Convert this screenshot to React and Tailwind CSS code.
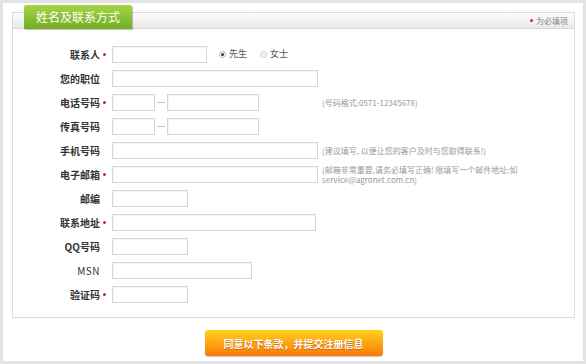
import React from "react";

const rows = [
  { label: "联系人", req: true, w: 95, radio: true },
  { label: "您的职位", w: 206 },
  { label: "电话号码", req: true, phone: true, hint: ["(号码格式:0571-12345678)"] },
  { label: "传真号码", phone: true },
  { label: "手机号码", w: 206, hint: ["(建议填写, 以便让您的客户及时与您取得联系!)"] },
  {
    label: "电子邮箱",
    req: true,
    w: 206,
    hint: ["(邮箱非常重要,请务必填写正确! 限填写一个邮件地址:如", "service@agronet.com.cn)"],
  },
  { label: "邮编", w: 76 },
  { label: "联系地址", req: true, w: 204 },
  { label: "QQ号码", w: 76 },
  { label: "MSN", w: 140, latin: true },
  { label: "验证码", req: true, w: 76 },
];

function Box({ w }) {
  return (
    <div
      className="h-[17px] border border-[#d6d6d6] bg-white shadow-[inset_1px_1px_1px_rgba(0,0,0,0.04)]"
      style={{ width: w }}
    />
  );
}

function Radio({ checked, text }) {
  return (
    <div className="flex items-center gap-[3px]">
      <span
        className={`flex h-[7px] w-[7px] items-center justify-center rounded-full border ${
          checked ? "border-[#b5b5b5]" : "border-[#d8d8d8] bg-[#f0f0f0]"
        }`}
      >
        {checked && <span className="h-[3px] w-[3px] rounded-full bg-[#333]" />}
      </span>
      <span className="text-[9px] text-[#555]">{text}</span>
    </div>
  );
}

export default function App() {
  return (
    <div
      className="h-[364px] w-[586px] bg-[#e3e3e3] p-[3px]"
      style={{ fontFamily: '"Noto Sans CJK SC", "Liberation Sans", sans-serif' }}
    >
      <div className="flex h-full flex-col items-center bg-white pl-[9px] pr-[8px] pt-[9px]">
        {/* panel */}
        <div className="w-full border border-[#dcdcdc]">
          <div className="flex h-[16px] items-end justify-between border-b border-[#d6d6d6] bg-gradient-to-b from-[#fdfdfd] to-[#e9e9e9] pl-[11px] pr-[6px]">
            <div className="relative -mb-[1px] flex h-[24px] w-[108px] items-center justify-center rounded-t-[2px] bg-gradient-to-b from-[#a6d448] to-[#72ae22] text-[12px] text-white shadow-[1px_1px_1px_rgba(0,0,0,0.25)]">
              姓名及联系方式
            </div>
            <div className="mb-[3px] flex items-center gap-[3px] text-[8px] leading-[9px] text-[#888]">
              <span className="h-[3px] w-[3px] rounded-full bg-[#c8283c]" />
              为必填项
            </div>
          </div>

          <div className="pb-[11px] pt-[13px]">
            {rows.map((r) => (
              <div key={r.label} className="flex h-[24px] items-center">
                <div
                  className={`w-[87px] text-right text-[10px] text-[#333] ${
                    r.latin ? "font-normal tracking-[0.5px]" : "font-bold"
                  }`}
                >
                  {r.label}
                </div>
                <div className="flex w-[12px] pl-[3px]">
                  {r.req && <span className="h-[3px] w-[3px] rounded-full bg-[#c8283c]" />}
                </div>
                <div className="flex w-[210px] items-center">
                  {r.phone ? (
                    <>
                      <Box w={43} />
                      <span className="mx-[2px] h-px w-[8px] bg-[#c8c8c8]" />
                      <Box w={92} />
                    </>
                  ) : (
                    <Box w={r.w} />
                  )}
                  {r.radio && (
                    <div className="ml-[12px] flex gap-[13px]">
                      <Radio checked text="先生" />
                      <Radio text="女士" />
                    </div>
                  )}
                </div>
                {r.hint && (
                  <div className="flex flex-col gap-[1px] text-[8px] leading-[9px] text-[#999]">
                    {r.hint.map((h) => (
                      <div key={h}>{h}</div>
                    ))}
                  </div>
                )}
              </div>
            ))}
          </div>
        </div>

        <button className="mt-[12px] h-[26px] w-[178px] rounded-[3px] bg-gradient-to-b from-[#ffd21a] via-[#ffa514] to-[#f57a0a] text-[10px] font-bold text-white shadow-[0_1px_1px_rgba(0,0,0,0.2)] [text-shadow:0_1px_1px_rgba(160,70,0,0.6)]">
          同意以下条款，并提交注册信息
        </button>
      </div>
    </div>
  );
}
